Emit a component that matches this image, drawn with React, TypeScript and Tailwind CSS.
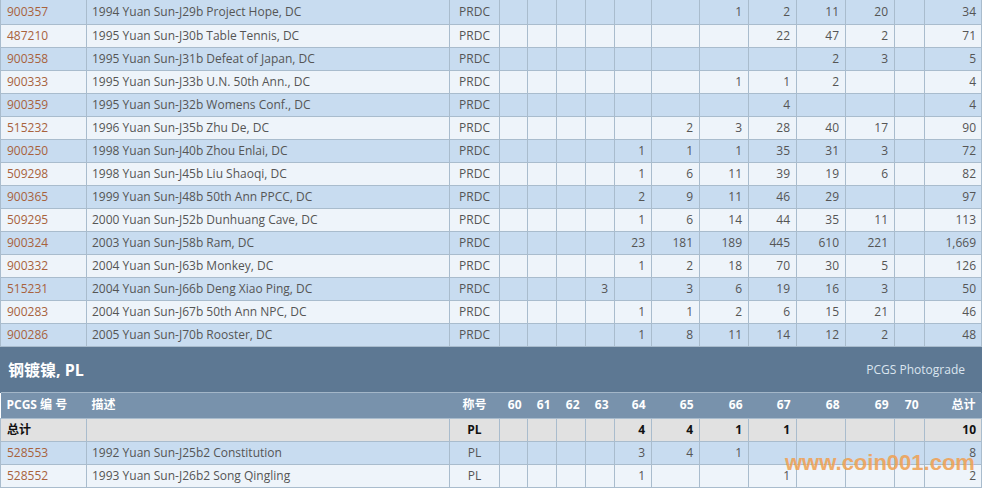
import React from "react";

const cols = [86, 363, 50, 28, 29, 29, 29, 37, 48, 49, 48, 49, 49, 30, 57];
const grades = [60, 61, 62, 63, 64, 65, 66, 67, 68, 69, 70];

type Row = { code: string; desc: string; grade: string; m: Record<number, string>; total: string };

const rows: Row[] = [
  { code: "900357", desc: "1994 Yuan Sun-J29b Project Hope, DC", grade: "PRDC", m: { 66: "1", 67: "2", 68: "11", 69: "20" }, total: "34" },
  { code: "487210", desc: "1995 Yuan Sun-J30b Table Tennis, DC", grade: "PRDC", m: { 67: "22", 68: "47", 69: "2" }, total: "71" },
  { code: "900358", desc: "1995 Yuan Sun-J31b Defeat of Japan, DC", grade: "PRDC", m: { 68: "2", 69: "3" }, total: "5" },
  { code: "900333", desc: "1995 Yuan Sun-J33b U.N. 50th Ann., DC", grade: "PRDC", m: { 66: "1", 67: "1", 68: "2" }, total: "4" },
  { code: "900359", desc: "1995 Yuan Sun-J32b Womens Conf., DC", grade: "PRDC", m: { 67: "4" }, total: "4" },
  { code: "515232", desc: "1996 Yuan Sun-J35b Zhu De, DC", grade: "PRDC", m: { 65: "2", 66: "3", 67: "28", 68: "40", 69: "17" }, total: "90" },
  { code: "900250", desc: "1998 Yuan Sun-J40b Zhou Enlai, DC", grade: "PRDC", m: { 64: "1", 65: "1", 66: "1", 67: "35", 68: "31", 69: "3" }, total: "72" },
  { code: "509298", desc: "1998 Yuan Sun-J45b Liu Shaoqi, DC", grade: "PRDC", m: { 64: "1", 65: "6", 66: "11", 67: "39", 68: "19", 69: "6" }, total: "82" },
  { code: "900365", desc: "1999 Yuan Sun-J48b 50th Ann PPCC, DC", grade: "PRDC", m: { 64: "2", 65: "9", 66: "11", 67: "46", 68: "29" }, total: "97" },
  { code: "509295", desc: "2000 Yuan Sun-J52b Dunhuang Cave, DC", grade: "PRDC", m: { 64: "1", 65: "6", 66: "14", 67: "44", 68: "35", 69: "11" }, total: "113" },
  { code: "900324", desc: "2003 Yuan Sun-J58b Ram, DC", grade: "PRDC", m: { 64: "23", 65: "181", 66: "189", 67: "445", 68: "610", 69: "221" }, total: "1,669" },
  { code: "900332", desc: "2004 Yuan Sun-J63b Monkey, DC", grade: "PRDC", m: { 64: "1", 65: "2", 66: "18", 67: "70", 68: "30", 69: "5" }, total: "126" },
  { code: "515231", desc: "2004 Yuan Sun-J66b Deng Xiao Ping, DC", grade: "PRDC", m: { 63: "3", 65: "3", 66: "6", 67: "19", 68: "16", 69: "3" }, total: "50" },
  { code: "900283", desc: "2004 Yuan Sun-J67b 50th Ann NPC, DC", grade: "PRDC", m: { 64: "1", 65: "1", 66: "2", 67: "6", 68: "15", 69: "21" }, total: "46" },
  { code: "900286", desc: "2005 Yuan Sun-J70b Rooster, DC", grade: "PRDC", m: { 64: "1", 65: "8", 66: "11", 67: "14", 68: "12", 69: "2" }, total: "48" },
];

const plRows: Row[] = [
  { code: "528553", desc: "1992 Yuan Sun-J25b2 Constitution", grade: "PL", m: { 64: "3", 65: "4", 66: "1" }, total: "8" },
  { code: "528552", desc: "1993 Yuan Sun-J26b2 Song Qingling", grade: "PL", m: { 64: "1", 67: "1" }, total: "2" },
];

const tdBase = "border border-[#a9bccd] p-0 leading-none";

function DataRow({ r, blue, first }: { r: Row; blue: boolean; first?: boolean }) {
  const td = `${tdBase} ${first ? "h-[24px] border-t-0" : "h-[23px]"}`;
  return (
    <tr className={blue ? "bg-[#c8dcf0]" : "bg-[#eef4fa]"}>
      <td className={`${td} pl-[6px] text-[#a8623c]`}>{r.code}</td>
      <td className={`${td} pl-[5px] text-[#555]`}>{r.desc}</td>
      <td className={`${td} text-center text-[#555]`}>{r.grade}</td>
      {grades.map((g) => (
        <td key={g} className={`${td} text-right pr-[6px] text-[#555]`}>
          {r.m[g] ?? ""}
        </td>
      ))}
      <td className={`${td} text-right pr-[5px] text-[#555]`}>{r.total}</td>
    </tr>
  );
}

export default function App() {
  const td = `${tdBase} h-[23px]`;
  return (
    <div className="relative w-[986px] h-[491px] bg-white overflow-hidden font-['Open_Sans','Noto_Sans_CJK_SC',sans-serif] text-[12px]">
      <table className="table-fixed border-collapse w-[982px]">
        <colgroup>
          {cols.map((w, i) => (
            <col key={i} style={{ width: w }} />
          ))}
        </colgroup>
        <tbody>
          {rows.map((r, i) => (
            <DataRow key={r.code} r={r} blue={i % 2 === 0} first={i === 0} />
          ))}
          <tr className="bg-[#5d7893]">
            <td colSpan={15} className="h-[46px] p-0 border-x border-[#5d7893]">
              <div className="flex items-center justify-between pl-[7px] pr-[16px] pt-[2px]">
                <span className="text-white font-bold text-[16px] leading-none">钢镀镍, PL</span>
                <span className="text-[#dbe5ef] text-[12px]">PCGS Photograde</span>
              </div>
            </td>
          </tr>
          <tr className="bg-[#7892ac] text-white font-bold border-t border-[#a3b6c8]">
            <td className="h-[26px] p-0 pl-[6px]">PCGS 编 号</td>
            <td className="p-0 pl-[5px]">描述</td>
            <td className="p-0 text-center">称号</td>
            {grades.map((g) => (
              <td key={g} className="p-0 text-right pr-[6px]">
                {g}
              </td>
            ))}
            <td className="p-0 text-right pr-[6px]">总计</td>
          </tr>
          <tr className="bg-[#e1e1e1] font-bold text-[#111]">
            <td className={`${td} pl-[6px]`}>总计</td>
            <td className={td}></td>
            <td className={`${td} text-center`}>PL</td>
            {grades.map((g) => (
              <td key={g} className={`${td} text-right pr-[6px]`}>
                {({ 64: "4", 65: "4", 66: "1", 67: "1" } as Record<number, string>)[g] ?? ""}
              </td>
            ))}
            <td className={`${td} text-right pr-[5px]`}>10</td>
          </tr>
          {plRows.map((r, i) => (
            <DataRow key={r.code} r={r} blue={i % 2 === 0} />
          ))}
        </tbody>
      </table>
      <div className="absolute left-[785px] top-[452px] font-['Liberation_Sans',Arial,sans-serif] font-bold text-[22px] leading-none text-[#f0a050] opacity-85">
        www.coin001.com
      </div>
    </div>
  );
}
